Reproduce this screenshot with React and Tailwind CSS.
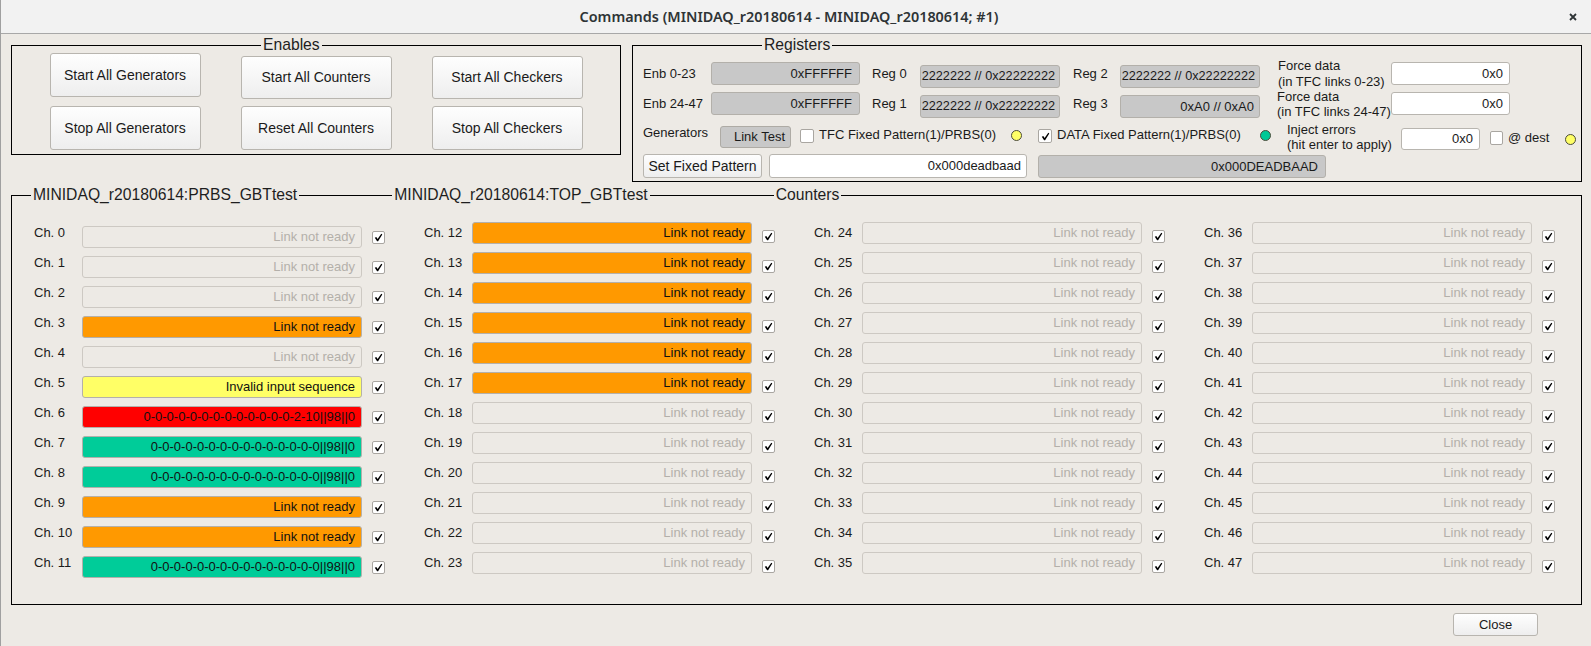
import React from "react";

const green = Array(15).fill("0").join("-") + "||98||0";
const red = Array(13).fill("0").join("-") + "-2-10||98||0";

// channel state -> style
const styles = {
  d: "border-[#cdc9c3] text-[#b4b0aa]",
  o: "bg-[#ff9900] border-[#b4b0aa] text-[#111]",
  y: "bg-[#ffff66] border-[#b4b0aa] text-[#111]",
  r: "bg-[#ff0000] border-[#b4b0aa] text-[#111]",
  g: "bg-[#00cc99] border-[#b4b0aa] text-[#111]",
};

const col1 = [
  ["d"], ["d"], ["d"], ["o"], ["d"], ["y", "Invalid input sequence"],
  ["r", red], ["g", green], ["g", green], ["o"], ["o"], ["g", green],
];
const col2 = Array.from({ length: 12 }, (_, i) => [i < 6 ? "o" : "d"]);
const colOff = Array.from({ length: 12 }, () => ["d"]);

function Check({ checked, className = "" }) {
  return (
    <div className={`flex items-center justify-center bg-white border border-[#a9a6a1] rounded-[2px] ${className}`}>
      {checked && (
        <svg width="9" height="9" viewBox="0 0 9 9">
          <path d="M0.8 4.7 L2.3 3.9 L3.6 6.1 L7.3 0.7 L8.3 1.4 L4.1 8.3 L3.1 8.3 Z" fill="#000" />
        </svg>
      )}
    </div>
  );
}

function Line({ className = "" }) {
  return <div className={`h-[10px] self-end border-t border-black ${className}`} />;
}

function Title({ children }) {
  return (
    <span className="px-[2px] text-[15.7px] leading-[20px] text-[#1e1e1e] whitespace-nowrap">
      {children}
    </span>
  );
}

function Led({ color, className = "" }) {
  return <div className={`w-[11px] h-[11px] rounded-full border border-[#4b4b3a] ${color} ${className}`} />;
}

function Btn({ children, className = "" }) {
  return (
    <div
      className={`flex items-center justify-center rounded-[3px] border border-[#b8b5af] bg-gradient-to-b from-[#fefefe] to-[#eeeeee] text-[#1a1a1a] whitespace-nowrap ${className}`}
    >
      {children}
    </div>
  );
}

function Field({ children, gray, className = "" }) {
  return (
    <div
      className={`flex items-center justify-end overflow-hidden whitespace-nowrap rounded-[3px] border ${
        gray ? "bg-[#c8c8c8] border-[#b3b0aa]" : "bg-white border-[#b8b5af]"
      } text-[#1a1a1a] ${className}`}
    >
      {children}
    </div>
  );
}

function Column({ start, rows, first }) {
  return (
    <div className="w-[351px] flex flex-col">
      {rows.map(([s, text], i) => (
        <div key={i} className="h-[30px] flex items-start">
          <span className="w-[48px] mt-[3px] leading-[15px] text-[13px] text-[#1a1a1a]">Ch. {start + i}</span>
          <div
            className={`w-[280px] h-[22px] flex items-center justify-end pr-[6px] rounded-[3px] border text-[13px] whitespace-nowrap ${styles[s]} ${
              first ? "mt-[4px]" : ""
            }`}
          >
            {text || "Link not ready"}
          </div>
          <Check checked className={`ml-[10px] w-[13px] h-[13px] ${first ? "mt-[9px]" : "mt-[8px]"}`} />
        </div>
      ))}
    </div>
  );
}

export default function App() {
  return (
    <div className="w-[1591px] h-[646px] overflow-hidden bg-[#edeae5] border-l border-[#a0a0a0] flex flex-col font-['Liberation_Sans',Arial,sans-serif] text-[13px] text-[#1a1a1a]">
      {/* title bar */}
      <div className="h-[34px] shrink-0 flex items-center bg-[#f2f2f2] border-b border-[#a8a8a8]">
        <div className="flex-1" />
        <span className="font-['Noto_Sans',sans-serif] font-semibold text-[14.4px] text-[#2e3436] whitespace-nowrap">
          Commands (MINIDAQ_r20180614 - MINIDAQ_r20180614; #1)
        </span>
        <div className="flex-1 flex justify-end pr-[14px]">
          <svg width="8" height="8" viewBox="0 0 8 8">
            <path d="M1 1 L7 7 M7 1 L1 7" stroke="#2e3436" strokeWidth="1.8" />
          </svg>
        </div>
      </div>

      <div className="flex-1 flex flex-col pl-[10px] pr-[9px] pt-[1px]">
        <div className="flex items-start gap-[11px]">
          {/* Enables */}
          <div className="w-[610px] flex flex-col">
            <div className="flex h-[20px]">
              <Line className="w-[250px] border-l" />
              <Title>Enables</Title>
              <Line className="flex-1 border-r" />
            </div>
            <div className="border-x border-b border-black grid grid-cols-[151px_151px_151px] justify-center gap-x-[40px] gap-y-[7px] pb-[4px] text-[14px] items-start">
              <Btn className="h-[44px] -mt-[2px]">Start All Generators</Btn>
              <Btn className="h-[43px] mt-[1px]">Start All Counters</Btn>
              <Btn className="h-[43px] mt-[1px]">Start All Checkers</Btn>
              <Btn className="h-[44px]">Stop All Generators</Btn>
              <Btn className="h-[44px]">Reset All Counters</Btn>
              <Btn className="h-[44px]">Stop All Checkers</Btn>
            </div>
          </div>

          {/* Registers */}
          <div className="flex-1 flex flex-col">
            <div className="flex h-[20px]">
              <Line className="w-[130px] border-l" />
              <Title>Registers</Title>
              <Line className="flex-1 border-r" />
            </div>
            <div className="border-x border-b border-black pt-[7px] pb-[3px] pl-[10px] flex flex-col">
              <div className="h-[26px] flex items-start">
                <span className="w-[68px] h-[23px] flex items-center">Enb 0-23</span>
                <Field gray className="w-[149px] h-[23px] pr-[7px]">0xFFFFFF</Field>
                <span className="ml-[12px] w-[48px] h-[23px] flex items-center">Reg 0</span>
                <Field gray className="w-[140px] h-[23px] mt-[3px] pr-[4px] text-[12.7px]">2222222 // 0x22222222</Field>
                <span className="ml-[13px] w-[47px] h-[23px] flex items-center">Reg 2</span>
                <Field gray className="w-[140px] h-[23px] mt-[3px] pr-[4px] text-[12.7px]">2222222 // 0x22222222</Field>
                <span className="ml-[18px] w-[113px] -mt-[4px] leading-[16px] whitespace-nowrap">
                  Force data<br />(in TFC links 0-23)
                </span>
                <Field className="w-[119px] h-[23px] pr-[6px]">0x0</Field>
              </div>
              <div className="h-[26px] mt-[4px] flex items-start">
                <span className="w-[68px] h-[23px] flex items-center">Enb 24-47</span>
                <Field gray className="w-[149px] h-[23px] pr-[7px]">0xFFFFFF</Field>
                <span className="ml-[12px] w-[48px] h-[23px] flex items-center">Reg 1</span>
                <Field gray className="w-[140px] h-[23px] mt-[3px] pr-[4px] text-[12.7px]">2222222 // 0x22222222</Field>
                <span className="ml-[13px] w-[47px] h-[23px] flex items-center">Reg 3</span>
                <Field gray className="w-[140px] h-[23px] mt-[3px] pr-[5px]">0xA0 // 0xA0</Field>
                <span className="ml-[17px] w-[114px] -mt-[3px] leading-[15px] whitespace-nowrap">
                  Force data<br />(in TFC links 24-47)
                </span>
                <Field className="w-[119px] h-[23px] pr-[6px]">0x0</Field>
              </div>
              <div className="h-[24px] mt-[8px] flex items-start">
                <span className="w-[77px] h-[14px] flex items-center">Generators</span>
                <div className="w-[71px] h-[22px] flex items-center pl-[13px] rounded-[3px] border border-[#aeaba5] bg-[#c8c8c8]">
                  Link Test
                </div>
                <Check className="ml-[9px] mt-[3px] w-[14px] h-[14px]" />
                <span className="ml-[5px] w-[180px] h-[18px] flex items-center whitespace-nowrap">TFC Fixed Pattern(1)/PRBS(0)</span>
                <Led color="bg-[#ffff66]" className="ml-[12px] mt-[4px]" />
                <Check checked className="ml-[16px] mt-[3px] w-[14px] h-[14px]" />
                <span className="ml-[5px] w-[190px] h-[18px] flex items-center whitespace-nowrap">DATA Fixed Pattern(1)/PRBS(0)</span>
                <Led color="bg-[#00c896]" className="ml-[13px] mt-[4px]" />
                <span className="ml-[16px] w-[114px] -mt-[4px] leading-[15px] whitespace-nowrap">
                  Inject errors<br />(hit enter to apply)
                </span>
                <Field className="w-[79px] h-[22px] mt-[2px] pr-[6px]">0x0</Field>
                <Check className="ml-[10px] mt-[5px] w-[13px] h-[14px]" />
                <span className="ml-[5px] w-[44px] h-[24px] flex items-center whitespace-nowrap">@ dest</span>
                <Led color="bg-[#ffff66]" className="ml-[13px] mt-[8px]" />
              </div>
              <div className="h-[24px] mt-[4px] flex items-start">
                <Btn className="w-[119px] h-[24px] text-[14px]">Set Fixed Pattern</Btn>
                <Field className="ml-[7px] w-[258px] h-[24px] pr-[5px]">0x000deadbaad</Field>
                <Field gray className="ml-[11px] w-[288px] h-[23px] mt-[1px] pr-[7px]">0x000DEADBAAD</Field>
              </div>
            </div>
          </div>
        </div>

        {/* Counters */}
        <div className="mt-[3px] flex flex-col">
          <div className="flex h-[20px]">
            <Line className="w-[20px] border-l" />
            <Title>MINIDAQ_r20180614:PRBS_GBTtest</Title>
            <Line className="w-[93px]" />
            <Title>MINIDAQ_r20180614:TOP_GBTtest</Title>
            <Line className="w-[124px]" />
            <Title>Counters</Title>
            <Line className="flex-1 border-r" />
          </div>
          <div className="border-x border-b border-black pt-[17px] pb-[22px] pl-[22px] flex gap-[39px]">
            <Column start={0} rows={col1} first />
            <Column start={12} rows={col2} />
            <Column start={24} rows={colOff} />
            <Column start={36} rows={colOff} />
          </div>
        </div>

        <div className="mt-[8px] flex justify-end pr-[44px]">
          <Btn className="w-[85px] h-[23px]">Close</Btn>
        </div>
      </div>
    </div>
  );
}
